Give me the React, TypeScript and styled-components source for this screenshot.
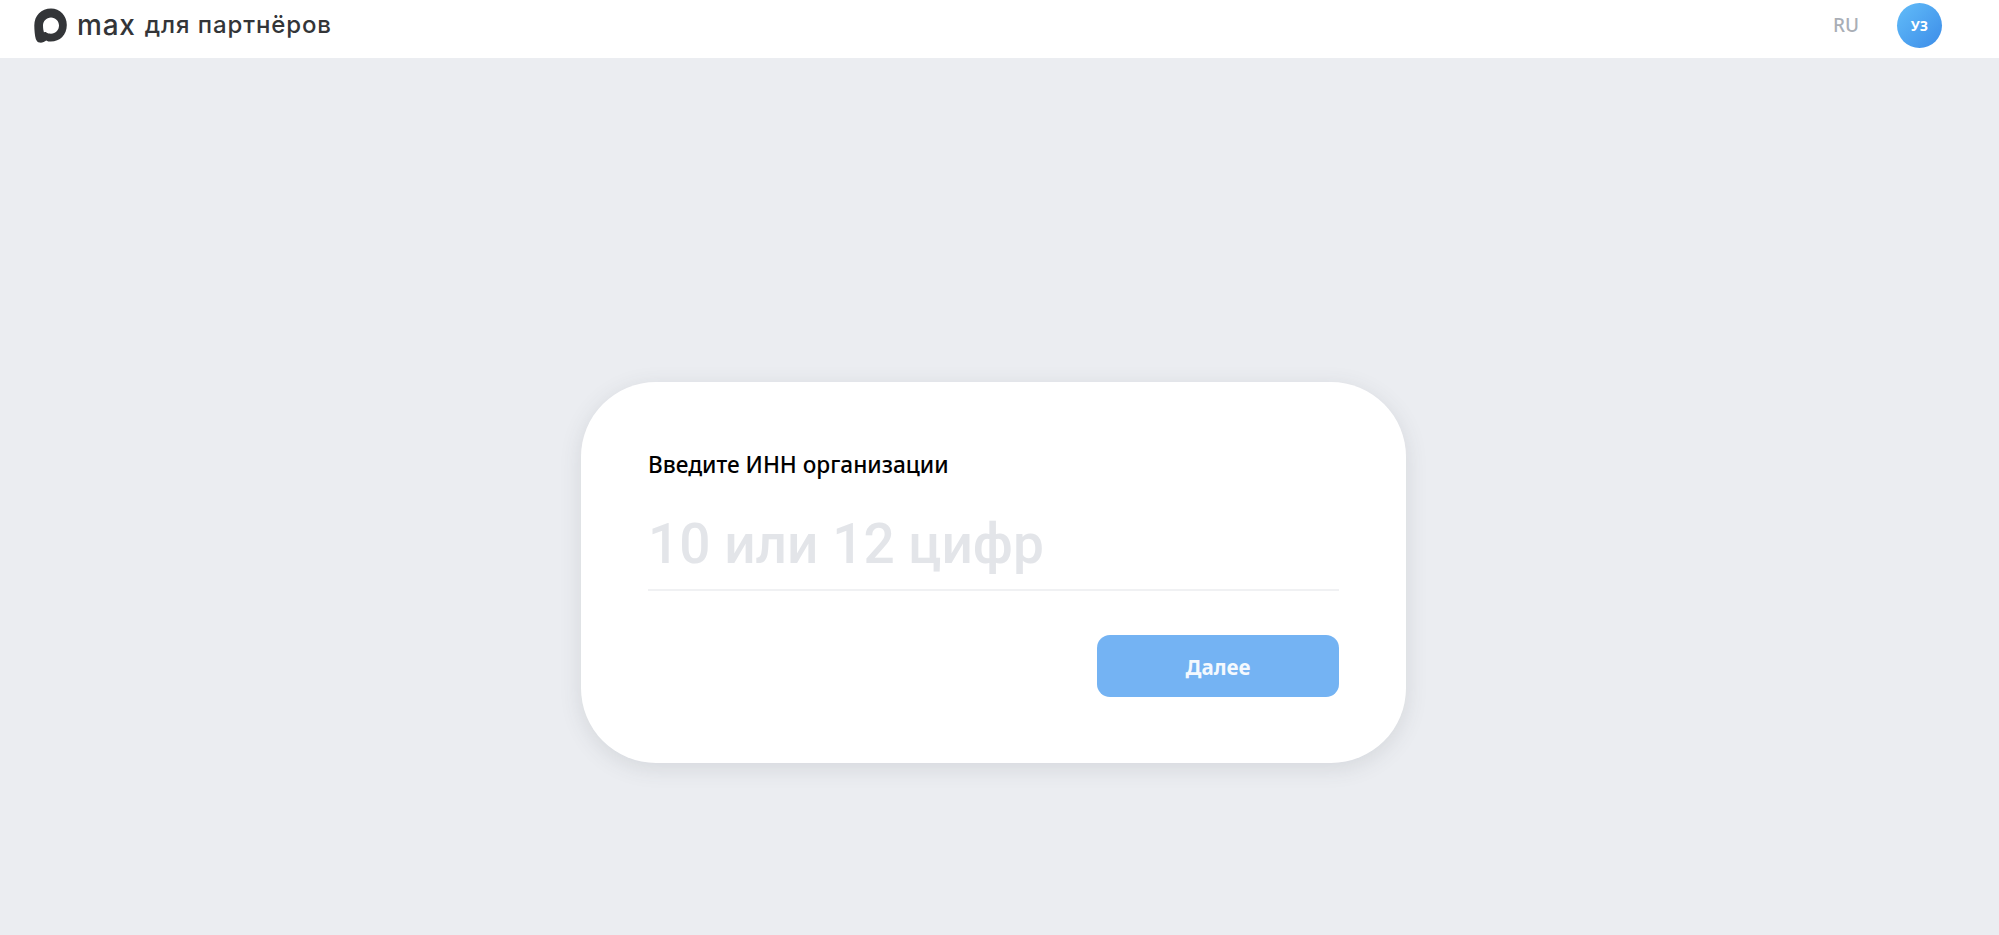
import React from 'react'
import styled, { createGlobalStyle } from 'styled-components'

const GlobalStyle = createGlobalStyle`
	html, body {
		margin: 0;
		padding: 0;
		background: #ebedf1;
	}

	body {
		font-family: 'Noto Sans', 'Open Sans', sans-serif;
	}
`

const Page = styled.div`
	display: flex;
	flex-direction: column;
	min-height: 100vh;
	background: #ebedf1;
`

const Header = styled.header`
	display: flex;
	align-items: center;
	justify-content: space-between;
	box-sizing: border-box;
	height: 58px;
	padding: 0 57px 8px 34px;
	background: #fff;
`

const Brand = styled.div`
	display: flex;
	align-items: center;
	color: #333538;
`

const LogoMark = styled.svg`
	width: 33px;
	height: 35px;
	margin-right: 10px;
`

const Wordmark = styled.span`
	font-family: Inter, sans-serif;
	font-size: 28px;
	font-weight: 500;
	letter-spacing: 0.8px;
	line-height: 1;
	margin-right: 9px;
`

const Tagline = styled.span`
	font-family: Inter, sans-serif;
	font-size: 24px;
	font-weight: 500;
	letter-spacing: 0.9px;
	line-height: 1;
`

const HeaderActions = styled.div`
	display: flex;
	align-items: center;
	gap: 38px;
`

const Locale = styled.span`
	font-size: 19px;
	font-weight: 500;
	color: #a9aeb6;
`

const Avatar = styled.div`
	display: flex;
	align-items: center;
	justify-content: center;
	width: 45px;
	height: 45px;
	border-radius: 50%;
	background: linear-gradient(135deg, #62bdf9 0%, #3c8ce8 100%);
	color: #fff;
	font-size: 14px;
	font-weight: 700;
`

const Main = styled.main`
	display: flex;
	justify-content: center;
	flex: 1;
	padding: 324px 12px 0 0;
`

const Card = styled.form`
	display: flex;
	flex-direction: column;
	box-sizing: border-box;
	width: 825px;
	height: 381px;
	padding: 68px 67px 0;
	border-radius: 75px;
	background: #fff;
	box-shadow: 0 5px 22px rgba(60, 66, 80, 0.13);
`

const Title = styled.label`
	font-size: 22.6px;
	font-weight: 500;
	line-height: 30px;
	color: #000;
`

const InnInput = styled.input`
	box-sizing: border-box;
	width: 100%;
	height: 100px;
	margin-top: 11px;
	padding: 7px 0 0;
	border: 0;
	border-bottom: 2px solid #f0f1f3;
	outline: none;
	background: transparent;
	font-family: Roboto, sans-serif;
	font-size: 55px;
	font-weight: 500;

	&::placeholder {
		color: #e3e5e9;
		opacity: 1;
	}
`

const Actions = styled.div`
	display: flex;
	justify-content: flex-end;
	margin-top: 44px;
`

const NextButton = styled.button`
	width: 242px;
	height: 62px;
	padding: 2px 0 0;
	border: 0;
	border-radius: 13px;
	background: #74b3f3;
	color: #f4f9fe;
	font-family: inherit;
	font-size: 20.5px;
	font-weight: 700;
`

export default function App() {
	return (
		<>
			<GlobalStyle />
			<Page>
				<Header>
					<Brand>
						<LogoMark viewBox='0 0 33 35' aria-hidden='true'>
							<path
								fillRule='evenodd'
								fill='#333538'
								d='M17 0.5C26 0.5 32.8 7.6 32.8 17C32.8 26.6 26 33.6 16.8 33.6C15 33.6 13.6 33.2 12.2 32.4C10.6 33.8 8 35 5.6 34.6C3.6 34.2 2.6 33 1.8 31C0.8 28 0.3 22 0.3 17.6C0.3 7.4 7.4 0.5 17 0.5ZM17 9.4C12.4 9.4 9 13 9 17.6C9 20 9.4 22.6 10 24.4C10.8 24 11.6 24 12.4 24.6C13.6 25.4 15 25.8 17 25.8C21.6 25.8 25 22 25 17.6C25 13 21.6 9.4 17 9.4Z'
							/>
						</LogoMark>
						<Wordmark>max</Wordmark>
						<Tagline>для партнёров</Tagline>
					</Brand>
					<HeaderActions>
						<Locale>RU</Locale>
						<Avatar>УЗ</Avatar>
					</HeaderActions>
				</Header>
				<Main>
					<Card>
						<Title htmlFor='inn'>Введите ИНН организации</Title>
						<InnInput id='inn' placeholder='10 или 12 цифр' />
						<Actions>
							<NextButton type='button'>Далее</NextButton>
						</Actions>
					</Card>
				</Main>
			</Page>
		</>
	)
}
